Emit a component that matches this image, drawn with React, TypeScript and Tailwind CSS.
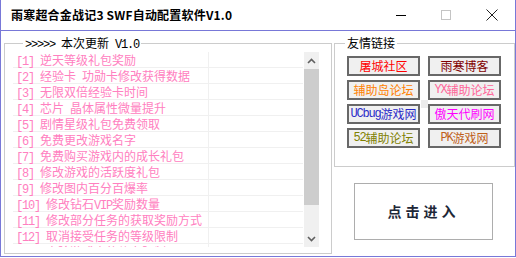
import React from "react";

const CJK = '"Noto Sans CJK SC", "Noto Sans", sans-serif';

function Mixed({ text }: { text: string }) {
  const parts = text.split(/([\x00-\x7F]+)/).filter((p) => p.length > 0);
  return (
    <>
      {parts.map((p, i) =>
        /^[\x00-\x7F]+$/.test(p) ? (
          <span
            key={i}
            className="tracking-[-1.2px] whitespace-pre"
            style={{ fontFamily: '"Liberation Mono", monospace' }}
          >
            {p}
          </span>
        ) : (
          <span key={i}>{p}</span>
        )
      )}
    </>
  );
}

const rows = [
  "[1] 逆天等级礼包奖励",
  "[2] 经验卡 功勋卡修改获得数据",
  "[3] 无限双倍经验卡时间",
  "[4] 芯片 晶体属性微量提升",
  "[5] 剧情星级礼包免费领取",
  "[6] 免费更改游戏名字",
  "[7] 免费购买游戏内的成长礼包",
  "[8] 修改游戏的活跃度礼包",
  "[9] 修改图内百分百爆率",
  "[10] 修改钻石VIP奖励数量",
  "[11] 修改部分任务的获取奖励方式",
  "[12] 取消接受任务的等级限制",
  "[13] 去除游戏内的体力限制",
];

const links: { t: string; c: string }[] = [
  { t: "屠城社区", c: "text-[#ff0000]" },
  { t: "雨寒博客", c: "text-[#800000]" },
  { t: "辅助岛论坛", c: "text-[#ff8000]" },
  { t: "YX辅助论坛", c: "text-[#ff6699]" },
  { t: "UCbug游戏网", c: "text-[#2a2ac8]" },
  { t: "傲天代刷网", c: "text-[#ff00ff]" },
  { t: "52辅助论坛", c: "text-[#808000]" },
  { t: "PK游戏网", c: "text-[#c0601a]" },
];

export default function App() {
  return (
    <div className="w-[516px] h-[258px] bg-white overflow-hidden" style={{ fontFamily: CJK }}>
      <div className="h-[257px] border-x border-b border-[#7878d8] flex flex-col">
        {/* Title bar */}
        <div className="h-[31px] border-b border-[#7878d8] flex items-center shrink-0">
          <div className="pl-[10px] text-[12px] font-bold text-black leading-none tracking-[0.2px]">
            雨寒超合金战记3 SWF自动配置软件V1.0
          </div>
          <div className="ml-auto flex items-center h-full">
            <svg width="12" height="12" viewBox="0 0 12 12" className="mr-[33px]">
              <line x1="1" y1="6.5" x2="11" y2="6.5" stroke="#000" strokeWidth="1" />
            </svg>
            <svg width="12" height="12" viewBox="0 0 12 12" className="mr-[33px]">
              <rect x="1.5" y="1.5" width="9" height="9" fill="none" stroke="#c4c4c4" strokeWidth="1" />
            </svg>
            <svg width="14" height="14" viewBox="0 0 14 14" className="mr-[16px]">
              <line x1="1.5" y1="1.5" x2="12.5" y2="12.5" stroke="#222" strokeWidth="1" />
              <line x1="12.5" y1="1.5" x2="1.5" y2="12.5" stroke="#222" strokeWidth="1" />
            </svg>
          </div>
        </div>

        {/* Body */}
        <div className="flex pl-[3px] pt-[12px]">
          {/* Left group box */}
          <div className="relative w-[328px] h-[211px] border border-[#cccccc] pt-[8px] pl-[8px] flex">
            <div className="absolute left-[18px] -top-[9px] px-[2px] bg-white text-[12px] leading-[16px] text-black">
              <Mixed text=">>>>> 本次更新 V1.0" />
            </div>
            <div className="w-[290px] h-[195px] overflow-hidden">
              {rows.map((r, i) => (
                <div key={i} className="flex h-[16px] border-b border-[#f0f0f0]">
                  <div className="w-[196px] border-r border-[#f0f0f0] pl-[3px] text-[12px] leading-[15px] text-[#ff80c0] whitespace-nowrap">
                    <Mixed text={r} />
                  </div>
                  <div className="flex-1" />
                </div>
              ))}
            </div>
            {/* Scrollbar */}
            <div className="ml-[1px] w-[15px] h-[195px] bg-[#f0f0f0] flex flex-col">
              <div className="h-[17px] flex items-center justify-center">
                <svg width="9" height="6" viewBox="0 0 9 6">
                  <path d="M1 5 L4.5 1.5 L8 5" fill="none" stroke="#606060" strokeWidth="1.6" />
                </svg>
              </div>
              <div className="h-[136px] bg-[#cdcdcd]" />
              <div className="flex-1" />
              <div className="h-[17px] flex items-center justify-center">
                <svg width="9" height="6" viewBox="0 0 9 6">
                  <path d="M1 1 L4.5 4.5 L8 1" fill="none" stroke="#606060" strokeWidth="1.6" />
                </svg>
              </div>
            </div>
          </div>

          {/* Right column */}
          <div className="ml-[2px] w-[181px] flex flex-col">
            <div className="relative h-[124px] border border-[#cccccc] pt-[12px] pl-[12px]">
              <div className="absolute left-[10px] -top-[9px] px-[2px] bg-white text-[12px] leading-[16px] text-black">
                友情链接
              </div>
              <div className="absolute left-[86px] top-[56px] w-[7px] h-[8px] bg-[#ececec]" />
              <div className="grid grid-cols-[73px_73px] gap-x-[8px] gap-y-[4px]">
                {links.map((l, i) => (
                  <div
                    key={i}
                    className={`h-[20px] border-2 border-[#686868] bg-[#f0f0f0] flex items-center justify-center text-[12px] leading-none whitespace-nowrap ${l.c}`}
                  >
                    <Mixed text={l.t} />
                  </div>
                ))}
              </div>
            </div>
            <div className="mt-[16px] ml-[20px] w-[139px] h-[57px] border border-[#adadad] bg-white flex items-center justify-center">
              <span className="text-[14px] font-bold tracking-[4px] text-[#1e2838]">点击进入</span>
            </div>
          </div>
        </div>
      </div>
    </div>
  );
}
